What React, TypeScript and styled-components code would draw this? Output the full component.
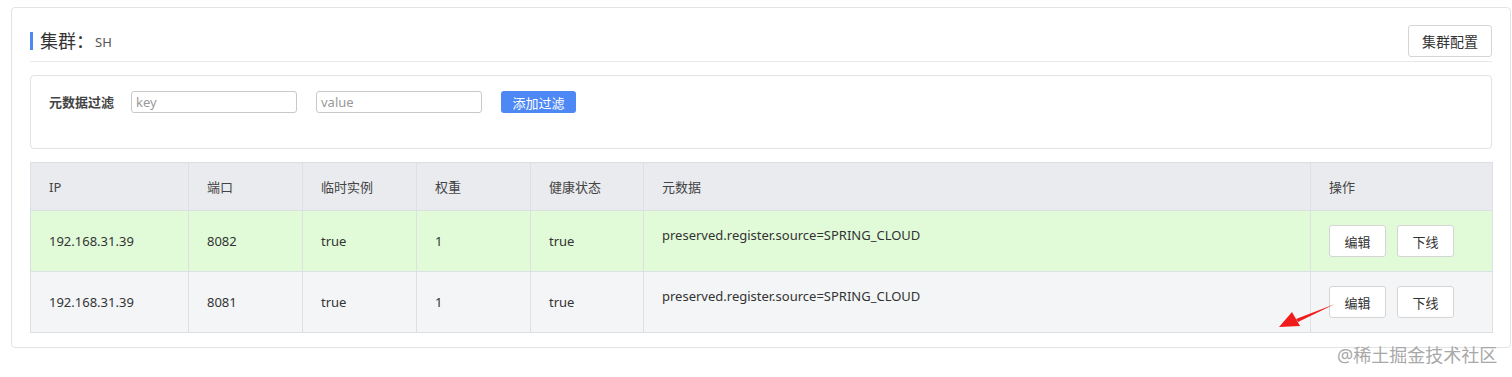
import styled, {createGlobalStyle} from "styled-components";

const GlobalStyle = createGlobalStyle`
  body {
    margin: 0;
    background: #fff;
    font-family: "Noto Sans", "Noto Sans CJK SC", sans-serif;
    color: #333;
  }
`;

type Instance = {
    ip: string
    port: string
    ephemeral: string
    weight: string
    healthy: string
    metadata: string
    online: boolean
}

const instances: Instance[] = [
    {ip: "192.168.31.39", port: "8082", ephemeral: "true", weight: "1", healthy: "true", metadata: "preserved.register.source=SPRING_CLOUD", online: true},
    {ip: "192.168.31.39", port: "8081", ephemeral: "true", weight: "1", healthy: "true", metadata: "preserved.register.source=SPRING_CLOUD", online: false},
];

const columns = [
    {title: "IP", width: 158},
    {title: "端口", width: 114},
    {title: "临时实例", width: 114},
    {title: "权重", width: 114},
    {title: "健康状态", width: 113},
    {title: "元数据", width: 667},
    {title: "操作", width: 182},
];

function App() {
    return (
        <Page>
            <GlobalStyle/>
            <Panel>
                <Header>
                    <Title>
                        集群：<Cluster>SH</Cluster>
                    </Title>
                    <Button>集群配置</Button>
                </Header>

                <FilterBox>
                    <FilterLabel>元数据过滤</FilterLabel>
                    <Input placeholder="key"/>
                    <Input placeholder="value"/>
                    <PrimaryButton>添加过滤</PrimaryButton>
                </FilterBox>

                <Table>
                    <colgroup>
                        {columns.map(c => <col key={c.title} style={{width: c.width}}/>)}
                    </colgroup>
                    <thead>
                    <tr>
                        {columns.map(c => <Th key={c.title}>{c.title}</Th>)}
                    </tr>
                    </thead>
                    <tbody>
                    {instances.map((row, i) => (
                        <Row key={i} online={row.online}>
                            <Td>{row.ip}</Td>
                            <Td>{row.port}</Td>
                            <Td>{row.ephemeral}</Td>
                            <Td>{row.weight}</Td>
                            <Td>{row.healthy}</Td>
                            <MetaTd>{row.metadata}</MetaTd>
                            <Td>
                                <Actions>
                                    <SmallButton>编辑</SmallButton>
                                    <SmallButton>下线</SmallButton>
                                </Actions>
                            </Td>
                        </Row>
                    ))}
                    </tbody>
                </Table>
            </Panel>

            {/* annotation arrow drawn over the table */}
            <Arrow width="60" height="30" viewBox="0 0 60 30">
                <path d="M57 2 L18 17 L20 20 Z" fill="#f01c1c"/>
                <path d="M1 25 L14 10 L22 24 Z" fill="#f01c1c"/>
            </Arrow>
            <Watermark>@稀土掘金技术社区</Watermark>
        </Page>
    );
}

export default App;

type RowProps = {
    online: boolean
}

const Page = styled.div`
  position: relative;
  width: 1512px;
  height: 377px;
  padding: 7px 0 0 11px;
  box-sizing: border-box;
`;

const Panel = styled.div`
  width: 1500px;
  box-sizing: border-box;
  border: 1px solid #e3e3e3;
  border-radius: 4px;
  padding: 17px 18px 14px 18px;
`;

const Header = styled.div`
  display: flex;
  align-items: center;
  justify-content: space-between;
  padding-bottom: 4px;
  border-bottom: 1px solid #e8e8e8;
`;

const Title = styled.h2`
  margin: 0;
  display: flex;
  align-items: center;
  height: 18px;
  padding-left: 7px;
  border-left: 3px solid #4e88f5;
  font-size: 18px;
  font-weight: 400;
  color: #333;
  line-height: 18px;
`;

const Cluster = styled.span`
  font-size: 13px;
  color: #555;
  margin-left: 1px;
  padding-top: 2px;
`;

const Button = styled.button`
  height: 32px;
  width: 84px;
  border: 1px solid #d5d5d5;
  border-radius: 3px;
  background: #fff;
  font-family: inherit;
  font-size: 14px;
  color: #333;
  padding: 0;
`;

const FilterBox = styled.div`
  margin-top: 13px;
  height: 74px;
  box-sizing: border-box;
  border: 1px solid #e3e3e3;
  border-radius: 4px;
  padding: 15px 18px;
  display: flex;
  align-items: flex-start;
`;

const FilterLabel = styled.span`
  font-size: 13px;
  font-weight: 600;
  color: #444;
  line-height: 22px;
  width: 82px;
`;

const Input = styled.input`
  width: 166px;
  height: 22px;
  box-sizing: border-box;
  border: 1px solid #c8c8c8;
  border-radius: 3px;
  padding: 0 4px;
  margin-right: 19px;
  font-family: inherit;
  font-size: 13px;
  color: #333;

  &::placeholder {
    color: #999;
  }
`;

const PrimaryButton = styled.button`
  width: 75px;
  height: 22px;
  border: none;
  border-radius: 3px;
  background: #4e88f5;
  color: #fff;
  font-family: inherit;
  font-size: 13px;
  padding: 0;
`;

const Table = styled.table`
  margin-top: 13px;
  width: 100%;
  table-layout: fixed;
  border-collapse: collapse;
  border: 1px solid #dcdfe4;
  font-size: 13px;
`;

const Th = styled.th`
  height: 47px;
  padding: 0 18px;
  text-align: left;
  font-weight: 400;
  color: #444;
  background: #e9ebef;
  border: 1px solid #dcdfe4;
`;

const Row = styled.tr<RowProps>`
  background: ${({online}) => online ? "#e1fbd9" : "#f4f5f7"};
`;

const Td = styled.td`
  height: 60px;
  padding: 0 18px;
  color: #333;
  border: 1px solid #dcdfe4;
`;

const MetaTd = styled(Td)`
  vertical-align: top;
  padding-top: 15px;
  box-sizing: border-box;
`;

const Actions = styled.div`
  display: flex;
  gap: 11px;
`;

const SmallButton = styled.button`
  width: 57px;
  height: 32px;
  border: 1px solid #d5d5d5;
  border-radius: 3px;
  background: #fff;
  font-family: inherit;
  font-size: 13px;
  color: #333;
  padding: 0;
`;

const Arrow = styled.svg`
  position: absolute;
  left: 1278px;
  top: 302px;
`;

const Watermark = styled.div`
  position: absolute;
  left: 1337px;
  top: 341px;
  font-size: 18px;
  color: #a8a8a8;
`;
